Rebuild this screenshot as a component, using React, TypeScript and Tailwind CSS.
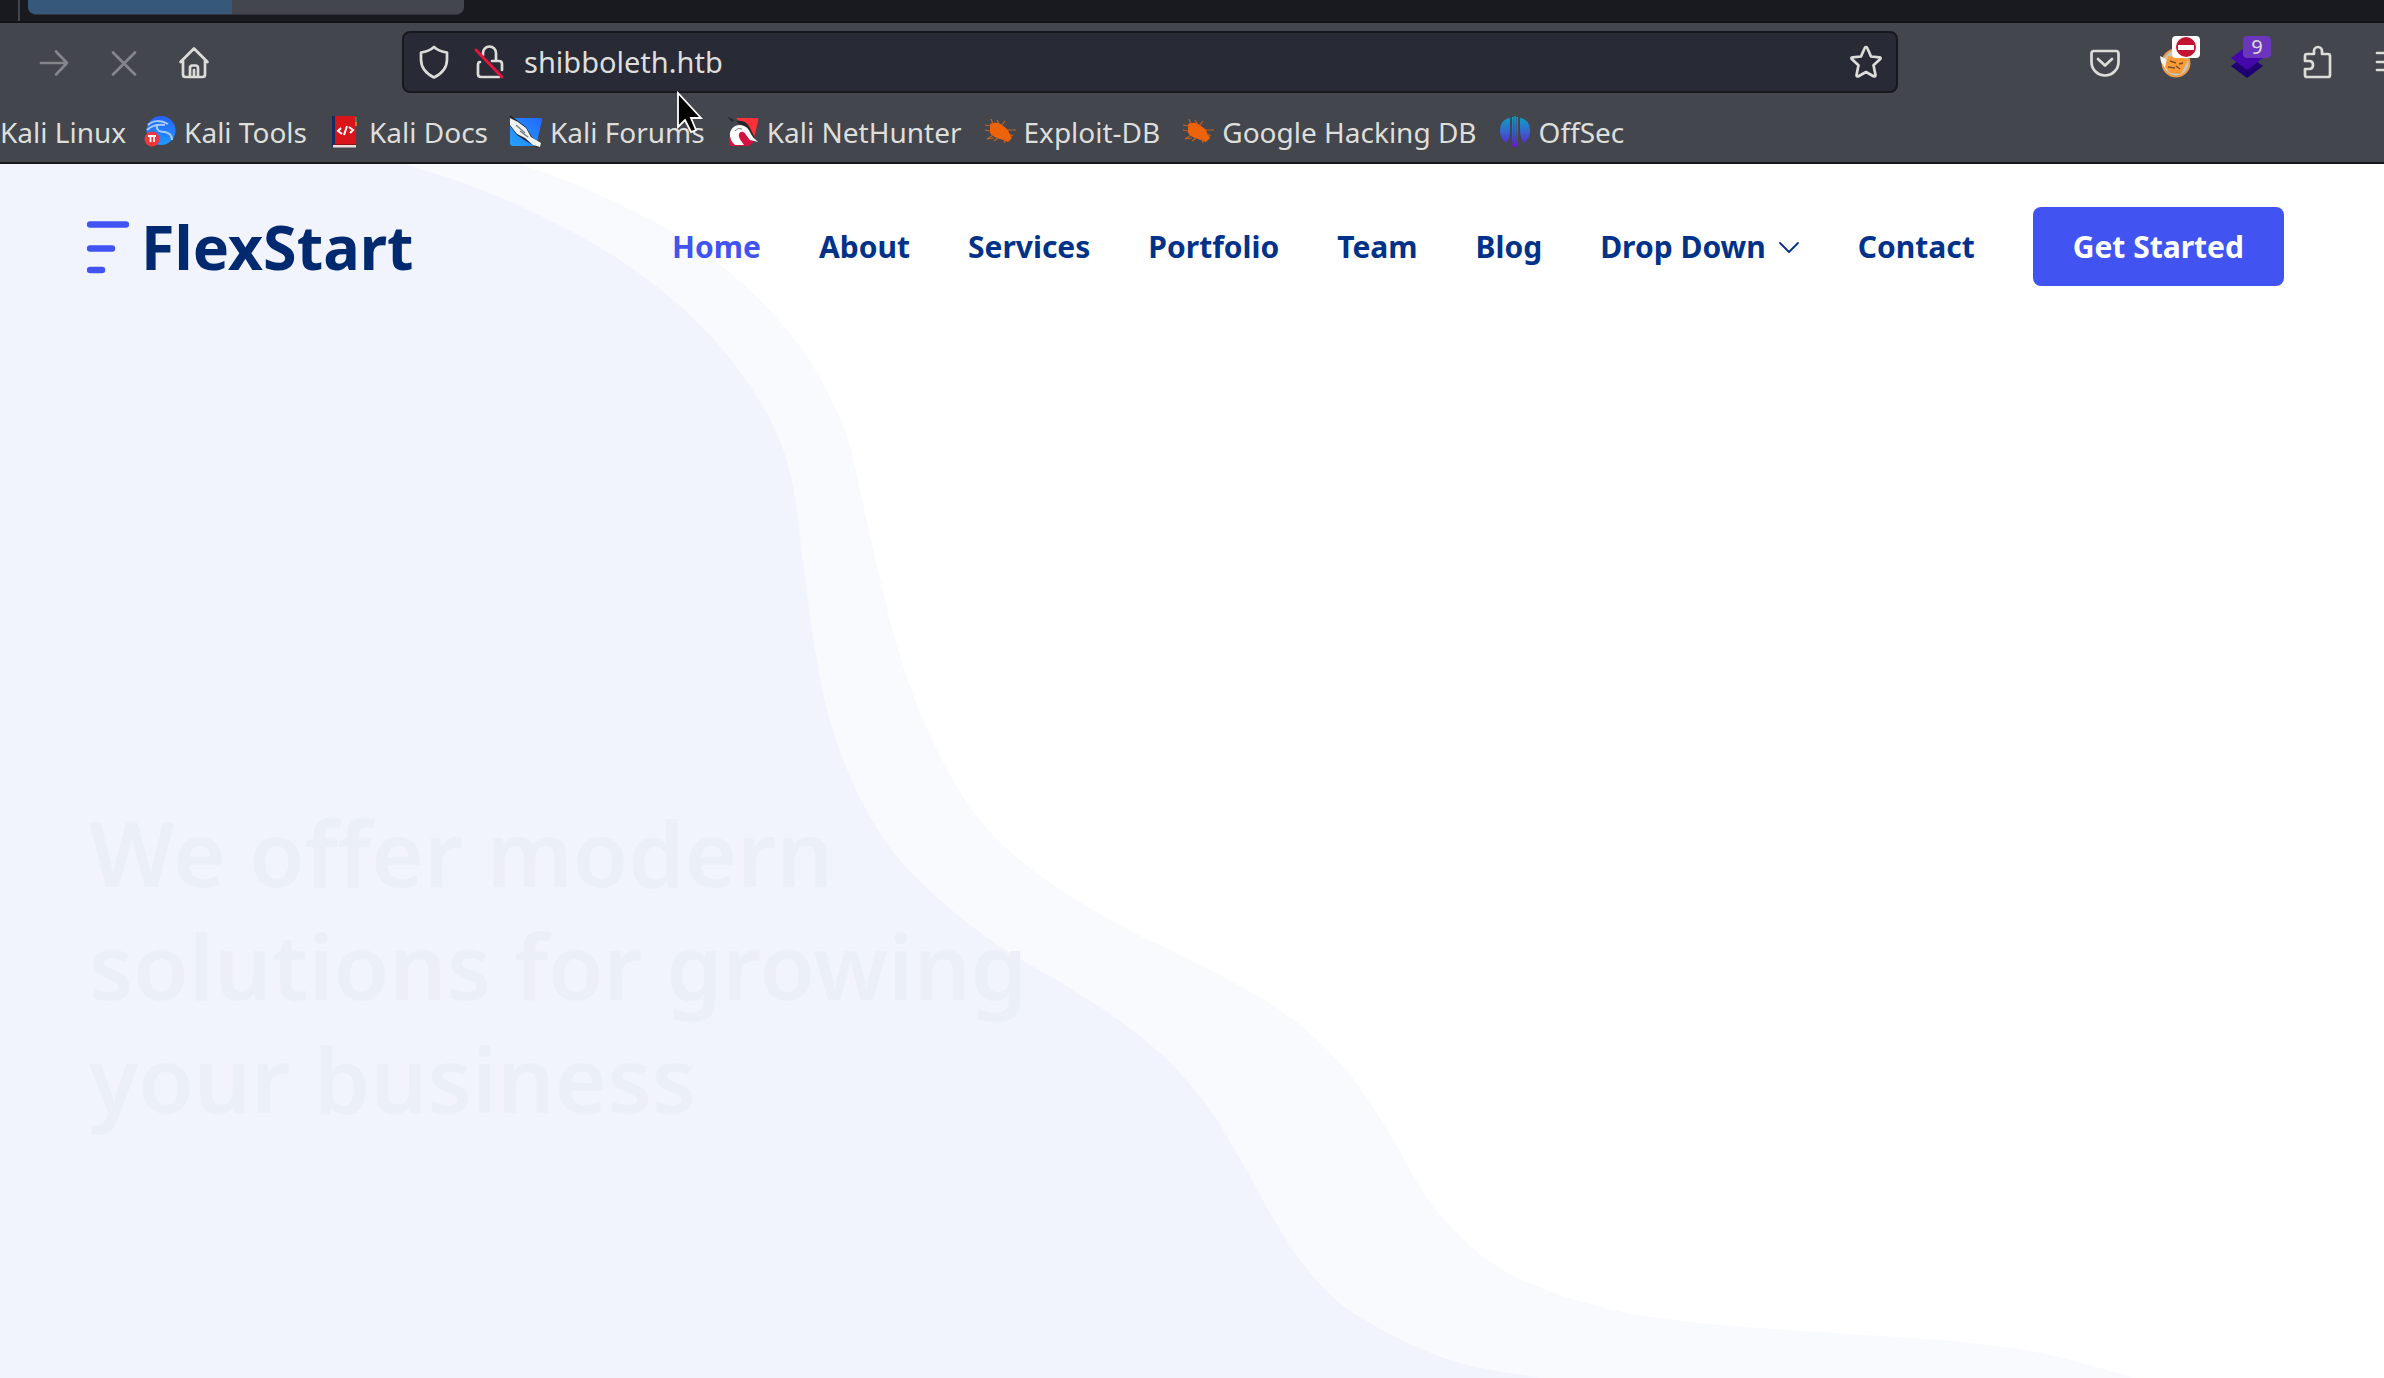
import type { ReactNode } from 'react';

type Point = [number, number];

const outerEdge: Point[] = [
  [500, -6], [523, 1], [587, 25], [670, 66], [713, 95], [763, 139], [810, 197], [845, 267], [861, 331], [880, 415],
  [900, 492], [928, 567], [966, 637], [1004, 682], [1055, 722], [1127, 765], [1198, 800], [1280, 846], [1341, 900],
  [1387, 965], [1417, 1018], [1453, 1065], [1510, 1110], [1600, 1143], [1700, 1159], [1820, 1168], [1950, 1177],
  [2040, 1189], [2136, 1214], [2160, 1222],
];

const innerEdge: Point[] = [
  [385, -5], [408, 1], [490, 29], [580, 72], [647, 115], [700, 161], [740, 208], [773, 261], [792, 317], [803, 398],
  [815, 485], [831, 560], [861, 636], [900, 696], [953, 747], [1004, 785], [1086, 834], [1152, 882], [1203, 936],
  [1239, 993], [1269, 1047], [1300, 1096], [1341, 1140], [1402, 1176], [1463, 1200], [1540, 1214], [1580, 1222],
];

function smoothPath(points: Point[]) {
  let d = `M-10 -10 L${points[0][0]} ${points[0][1]}`;
  for (let i = 0; i < points.length - 1; i++) {
    const p0 = points[Math.max(i - 1, 0)];
    const p1 = points[i];
    const p2 = points[i + 1];
    const p3 = points[Math.min(i + 2, points.length - 1)];
    d += ` C${p1[0] + (p2[0] - p0[0]) / 6} ${p1[1] + (p2[1] - p0[1]) / 6} ${p2[0] - (p3[0] - p1[0]) / 6} ${p2[1] - (p3[1] - p1[1]) / 6} ${p2[0]} ${p2[1]}`;
  }
  return d + ' L-10 1222 Z';
}

function LineIcon({ children, className = 'size-9 text-[#dcdcd9]' }: { children: ReactNode; className?: string }) {
  return (
    <svg viewBox="0 0 36 36" className={className} fill="none" stroke="currentColor" strokeWidth="2.7" strokeLinecap="round" strokeLinejoin="round" aria-hidden="true">
      {children}
    </svg>
  );
}

function ToolsIcon() {
  return (
    <svg viewBox="0 0 32 34" className="h-[34px] w-8" aria-hidden="true">
      <defs>
        <linearGradient id="tools" x1="0" y1="0" x2="0" y2="1"><stop stopColor="#2463ff" /><stop offset="1" stopColor="#2196fb" /></linearGradient>
      </defs>
      <circle cx="17" cy="15.500" r="14.500" fill="url(#tools)" />
      <path d="M4 10C9 5 17 5 24 9M3 15c5-5 11-6 18-5M13 10c-1 6 3 7 8 7 5 1 7 4 7 8" fill="none" stroke="#a9cbff" strokeWidth="2" />
      <circle cx="8" cy="24" r="7.500" fill="#f0383c" />
      <path d="M4 21h8M6.500 21v6M10 21v6" stroke="#fff" strokeWidth="1.800" />
    </svg>
  );
}

function DocsIcon() {
  return (
    <svg viewBox="0 0 32 34" className="h-[34px] w-8" aria-hidden="true">
      <path d="M3 1h4v31H3z" fill="#142a63" />
      <path d="M6 1h21v28H6z" fill="#d9151b" />
      <path d="M4 29h23v1H4z" fill="#8e1115" />
      <path d="M4 30h23v2.500H4z" fill="#e8dede" />
      <path d="M27 2v5" stroke="#2d9d55" strokeWidth="1.500" />
      <path d="M27 7v4" stroke="#d79b28" strokeWidth="1.500" />
      <path d="M12 13l-3 3 4 3M20 12l4 3-3 3M15 20l3-9" fill="none" stroke="#fff" strokeWidth="2" />
    </svg>
  );
}

function ForumsIcon() {
  return (
    <svg viewBox="0 0 32 34" className="h-[34px] w-8" aria-hidden="true">
      <defs>
        <linearGradient id="forums" x1="1" y1="0" x2="0" y2="1"><stop stopColor="#2367ff" /><stop offset="1" stopColor="#25a4ff" /></linearGradient>
      </defs>
      <path d="M1 3h30q1 0 1 2l-5 22q-1 4-4 4H3q-3 0-3-3V5z" fill="url(#forums)" />
      <path d="M0 0l8 6 8 6 6 10 9 7-3 4-5-3-7-4-9-6-7-9z" fill="#22252a" />
      <path d="M0 3l8 4 8 6 5 9 10 6-1 4-7-2-8-7-8-4-7-9z" fill="#f1f3f2" />
      <path d="M6 10l9 8M10 16l8 6" stroke="#737a82" strokeWidth="1.200" />
    </svg>
  );
}

function NetHunterIcon() {
  return (
    <svg viewBox="0 0 32 34" className="h-[34px] w-8" aria-hidden="true">
      <path d="M9 3h21q2 0 1 3l-4 18-9-12z" fill="#fb3038" />
      <path d="M2 21l6-8 10 2 9 12-5 4H5q-4 0-3-5z" fill="#d5123f" />
      <path d="M0 1l7 4-2 2zM9 6q10-2 14 7l7 14-5-1-9-14z" fill="#26272b" />
      <path d="M3 21c-1-8 7-13 14-10 6 2 6 9 11 13l3 3-8-2c-4-4-5-9-9-8-3 1-3 5 1 10l2 3H8q-4-3-5-9z" fill="#fff" />
      <path d="M8 16q3-4 7-2" fill="none" stroke="#777" />
    </svg>
  );
}

function BugIcon() {
  return (
    <svg viewBox="0 0 32 34" className="h-[34px] w-8" aria-hidden="true">
      <path d="M6 9q7-3 12 1l5 4q2 2 2 4l3 5-4 4-5-2-6-2q-7-3-7-6z" fill="#ee6209" />
      <path d="M7 11L1 10M9 9L7 4M15 9l-2-4M18 10l3-4M24 15l8 0M25 19l4 2M6 16l-5-1M9 20l-6 4 7-1M14 23l-4 3M20 24l1 4" fill="none" stroke="#c2601f" strokeWidth="1.200" />
    </svg>
  );
}

function OffSecIcon() {
  return (
    <svg viewBox="0 0 32 34" className="h-[34px] w-8" aria-hidden="true">
      <defs>
        <linearGradient id="offsec" x1="0" y1="1" x2="0" y2="32" gradientUnits="userSpaceOnUse"><stop stopColor="#0aa3c4" /><stop offset=".5" stopColor="#3467cf" /><stop offset="1" stopColor="#6716d2" /></linearGradient>
      </defs>
      <g fill="url(#offsec)">
        <path d="M11 3C4 4 1 9 1 16c0 5 2 9 6 12 3-3 4-9 4-14z" />
        <path d="M21 3c7 1 10 6 10 13 0 5-2 9-6 12-3-3-4-9-4-14z" />
        <path d="M13 2h1.500v25H13zM17.500 2H19v25h-1.500zM15.200 1h1.600v27h-1.600z" />
        <circle cx="16" cy="29.500" r="2.800" />
      </g>
    </svg>
  );
}

const bookmarks = [
  { label: 'Kali Tools', icon: <ToolsIcon /> },
  { label: 'Kali Docs', icon: <DocsIcon /> },
  { label: 'Kali Forums', icon: <ForumsIcon /> },
  { label: 'Kali NetHunter', icon: <NetHunterIcon /> },
  { label: 'Exploit-DB', icon: <BugIcon /> },
  { label: 'Google Hacking DB', icon: <BugIcon /> },
  { label: 'OffSec', icon: <OffSecIcon /> },
];

const links = ['About', 'Services', 'Portfolio', 'Team', 'Blog'];

function BrowserChrome() {
  return (
    <div className="relative border-b-2 border-[#16171b] bg-[#44464d] text-[#dededb]">
      <div className="flex h-[23px] border-b-2 border-[#111216] bg-[#191a1f] pl-[18px]">
        <div className="w-0.5 bg-[#44464d]" />
        <div className="ml-2 flex h-[15px] w-[436px] overflow-hidden rounded-b-lg border-b border-[#33353b] bg-[#44464d]">
          <div className="w-[204px] bg-[#35587b]" />
        </div>
      </div>

      <div className="flex items-center overflow-hidden pt-2">
        <div className="flex w-[402px] shrink-0 items-center gap-[34px] pl-9">
          <button type="button" aria-label="Forward"><LineIcon className="size-9 text-[#85868a]"><path d="M5 19h26M20 7.500l11 11.500-11 11.500" /></LineIcon></button>
          <button type="button" aria-label="Stop"><LineIcon className="size-9 text-[#85868a]"><path d="M7 8.500l22 22M29 8.500l-22 22" /></LineIcon></button>
          <button type="button" aria-label="Home page">
            <LineIcon><path d="M4.500 18L18 4.500 31.500 18M7 16v14.500q0 2.500 2.500 2.500h17q2.500 0 2.500-2.500V16M14 32v-8q0-2.500 2.500-2.500h3Q22 21.500 22 24v8M18 26v6" /></LineIcon>
          </button>
        </div>
        <div className="flex h-[62px] min-w-0 flex-1 items-center rounded-lg border-2 border-[#17181d] bg-[#282a36] pr-3 pl-3">
          <LineIcon><path d="M18 3q5 4.500 13 5.500v7c0 8-5 14-13 18C10 29.500 5 23.500 5 15.500v-7Q13 7.500 18 3z" /></LineIcon>
          <div className="ml-[19px] flex">
            <LineIcon>
              <path d="M12 11V9a6.500 6.500 0 0 1 13 0v8M9 18q-2 0-2 3v9q0 3 3 3h18M21 17h7q3 0 3 3v6" />
              <path d="M5 6l26 27" stroke="#e3153f" strokeWidth="3" />
            </LineIcon>
          </div>
          <input aria-label="Address" defaultValue="shibboleth.htb" className="ml-[17px] min-w-0 flex-1 bg-transparent text-[29px] leading-9 outline-none" />
          <button type="button" aria-label="Bookmark this page">
            <LineIcon><path d="M18 3q1 0 1.500 1.500l3.500 8 8.500.800q2 .400.500 2l-6.500 6 2 9.700q0 2-2 1.200L18 28l-7.500 4.200q-2 .800-2-1.200l2-9.700-6.500-6q-1.500-1.600.500-2l8.500-.800 3.500-8Q17 3 18 3z" /></LineIcon>
          </button>
        </div>
        <div className="flex w-[486px] shrink-0 items-center gap-[35px] pl-[189px]">
          <button type="button" aria-label="Save to Pocket">
            <LineIcon><path d="M7 7h22q2.500 0 2.500 2.500V18a13.500 13.500 0 0 1-27 0V9.500Q4.500 7 7 7zM11 15l7 6.500 7-6.500" /></LineIcon>
          </button>
          <button type="button" aria-label="Proxy switcher" className="relative">
            <svg viewBox="0 0 36 36" className="size-9" aria-hidden="true">
              <circle cx="18" cy="19" r="13.500" fill="#c9c4bc" stroke="#eb9a45" strokeWidth="2" />
              <path d="M2 12l6 3 1 12-6-9z" fill="#f5f2ed" />
              <path d="M10 12l16 2 4 2-7 14-11-1-5-6z" fill="#fc9a35" />
              <path d="M12 17l6 2M21 20l4-1M10 23l7 1M22 25l-4-3" stroke="#75512e" strokeWidth="1.500" />
            </svg>
            <span className="absolute -top-2 left-3.5 flex h-[22px] w-7 items-center justify-center rounded-sm bg-white">
              <span className="flex size-5 items-center justify-center rounded-full bg-[#c41431]"><span className="h-[5px] w-4 bg-white" /></span>
            </span>
          </button>
          <button type="button" aria-label="Wappalyzer" className="relative">
            <svg viewBox="0 0 36 36" className="size-9" aria-hidden="true">
              <path d="M2 22l16-11 16 11-16 12z" fill="#1f0073" />
              <path d="M2 14L18 2l16 12-16 12z" fill="#4407ac" />
            </svg>
            <span className="absolute -top-2 left-3.5 h-[22px] w-7 rounded-sm bg-[#6b36bd] text-center text-xl leading-[22px]">9</span>
          </button>
          <button type="button" aria-label="Extensions">
            <LineIcon><path d="M7 33q-2 0-2-2v-6h4q4 0 4-4t-4-4H5v-5q0-2 2-2h7V7a4 4 0 0 1 8 0v3h6q2 0 2 2v19q0 2-2 2z" /></LineIcon>
          </button>
          <button type="button" aria-label="Menu" className="shrink-0">
            <LineIcon><path d="M6 9h24M6 18h24M6 26h24" /></LineIcon>
          </button>
        </div>
      </div>

      <nav aria-label="Bookmarks" className="flex h-[69px] items-center gap-[22px] pt-3 pb-1 text-[28px] leading-9 whitespace-nowrap">
        <a href="#kali-linux" className="-mr-1">Kali Linux</a>
        {bookmarks.map((b) => (
          <a key={b.label} href="#bookmark" className="flex items-center gap-2">{b.icon}{b.label}</a>
        ))}
      </nav>

      <svg viewBox="0 0 28 44" className="absolute top-[90px] left-[676px] h-11 w-7" aria-hidden="true">
        <path d="M2 3v34l7-7 6 12 5-2-5-12h10z" fill="#000" stroke="#fff" strokeWidth="1.800" />
      </svg>
    </div>
  );
}

export default function App() {
  return (
    <div className="flex min-h-screen flex-col bg-white font-['Noto_Sans',sans-serif]">
      <BrowserChrome />
      <div className="relative flex-1 overflow-hidden">
        <svg viewBox="0 0 2384 1214" preserveAspectRatio="xMinYMin slice" className="absolute inset-0 h-full w-full" aria-hidden="true">
          <path d={smoothPath(outerEdge)} fill="#f9fafe" />
          <path d={smoothPath(innerEdge)} fill="#f1f4fd" />
        </svg>
        <div className="relative pr-[100px] pl-[87px]">
          <header className="flex items-center justify-between pt-[43px]">
            <a href="#top" className="flex items-center gap-3 text-[61px] leading-none font-bold text-[#012970]">
              <svg viewBox="0 0 42 54" className="h-[54px] w-[42px]" fill="none" stroke="#4154f1" strokeWidth="6.500" strokeLinecap="round" aria-hidden="true">
                <path d="M3 4.500h36M3 28.500h22M3 50h12" />
              </svg>
              FlexStart
            </a>
            <nav aria-label="Main" className="flex items-center gap-[58px] text-3xl font-bold text-[#013289]">
              <a href="#home" className="text-[#4154f1]">Home</a>
              {links.map((l) => <a key={l} href="#section">{l}</a>)}
              <a href="#dropdown" className="flex items-center gap-3">
                Drop Down
                <svg viewBox="0 0 22 22" className="size-[22px]" fill="none" stroke="currentColor" strokeWidth="1.800" strokeLinecap="round" strokeLinejoin="round" aria-hidden="true">
                  <path d="M2 7l9 9 9-9" />
                </svg>
              </a>
              <a href="#contact">Contact</a>
              <a href="#get-started" className="rounded-lg bg-[#4154f1] px-10 py-5 leading-[39px] text-white">Get Started</a>
            </nav>
          </header>
          <h1 className="max-w-[1060px] pl-0.5 pt-[510px] text-[90px] leading-[113px] font-semibold text-[#ebeff8]">
            We offer modern solutions for growing your business
          </h1>
        </div>
      </div>
    </div>
  );
}
